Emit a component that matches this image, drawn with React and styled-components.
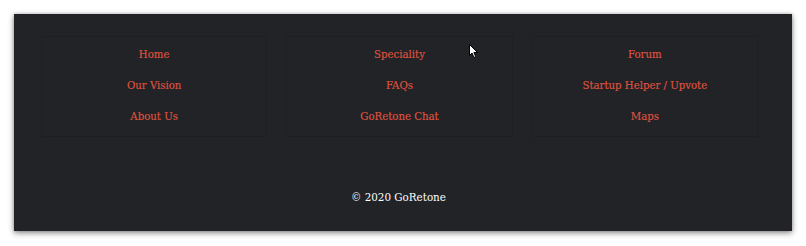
import React from 'react';
import styled, { createGlobalStyle } from 'styled-components';

const GlobalStyle = createGlobalStyle`
  body {
    margin: 0;
    background: #ffffff;
    font-family: "DejaVu Serif Condensed", "DejaVu Serif", "Liberation Serif", serif;
  }
`;

const Page = styled.div`
  padding: 14px 14px 15px 14px;
  position: relative;
`;

const Footer = styled.footer`
  background-color: #212327;
  height: 217px;
  box-sizing: border-box;
  padding: 22px 34px 0 27px;
  box-shadow: 0 2px 6px rgba(0, 0, 0, 0.45), 0 0 3px rgba(0, 0, 0, 0.2);
  display: flex;
  flex-direction: column;
  align-items: stretch;
`;

const Columns = styled.div`
  display: grid;
  grid-template-columns: repeat(3, 1fr);
  column-gap: 19px;
`;

const Card = styled.div`
  height: 101px;
  box-sizing: border-box;
  border: 1px solid #1d1f22;
  display: flex;
  flex-direction: column;
  align-items: center;
  padding-top: 2px;
`;

const NavLink = styled.a`
  color: #e0533f;
  font-size: 11.3px;
  line-height: 31px;
  text-decoration: none;
  -webkit-text-stroke: 0.12px #e0533f;
`;

const Copy = styled.div`
  color: #ffffff;
  font-size: 11.5px;
  text-align: center;
  margin-top: 53px;
  padding-right: 2px;
`;

const Cursor = styled.svg`
  position: absolute;
  left: 469px;
  top: 44px;
`;

const columns = [
  ['Home', 'Our Vision', 'About Us'],
  ['Speciality', 'FAQs', 'GoRetone Chat'],
  ['Forum', 'Startup Helper / Upvote', 'Maps'],
];

export default function App() {
  return (
    <>
      <GlobalStyle />
      <Page>
        <Footer>
          <Columns>
            {columns.map((links, i) => (
              <Card key={i}>
                {links.map((l) => (
                  <NavLink key={l} href="#">{l}</NavLink>
                ))}
              </Card>
            ))}
          </Columns>
          <Copy>© 2020 GoRetone</Copy>
        </Footer>
        <Cursor width="10" height="15" viewBox="0 0 10 15">
          <path d="M0.5 0.5 L0.5 11.5 L3 9 L5 13.5 L6.8 12.7 L4.9 8.5 L8.5 8.5 Z" fill="#fff" stroke="#000" strokeWidth="1" />
        </Cursor>
      </Page>
    </>
  );
}
